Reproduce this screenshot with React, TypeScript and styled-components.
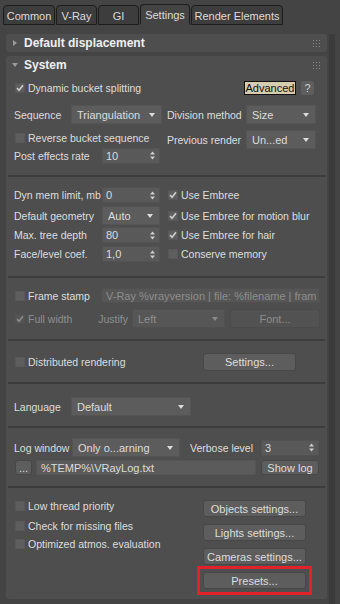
import React from "react";
import styled, { createGlobalStyle, css } from "styled-components";

const Global = createGlobalStyle`
  html, body { margin: 0; padding: 0; background: #444444; }
  body {
    font-family: "Liberation Sans", Arial, sans-serif;
    font-size: 10.5px;
    color: #dedede;
    width: 340px;
    height: 604px;
    overflow: hidden;
  }
  * { box-sizing: border-box; }
`;

const Root = styled.div`
  width: 340px;
  height: 604px;
  display: flex;
  flex-direction: column;
`;

const TabBar = styled.div`
  display: flex;
  align-items: flex-end;
  height: 25px;
  padding-left: 3px;
`;

const Tab = styled.div<{ $w: number; $active?: boolean }>`
  width: ${(p) => p.$w}px;
  height: ${(p) => (p.$active ? 21 : 20)}px;
  margin-right: 1px;
  display: flex;
  align-items: center;
  justify-content: center;
  font-size: 11px;
  color: #dcdcdc;
  border: 1px solid #1c1c1c;
  border-bottom: ${(p) => (p.$active ? "1px solid #444444" : "1px solid #1c1c1c")};
  border-radius: 4px 4px 0 0;
  background: ${(p) => (p.$active ? "#444444" : "#3d3d3d")};
  padding-top: 1px;
`;

const Main = styled.div`
  display: flex;
  padding-top: 9px;
  flex: 1;
  min-height: 0;
`;

const Rollouts = styled.div`
  margin-left: 6px;
  width: 321px;
  display: flex;
  flex-direction: column;
  gap: 4px;
`;

const Scrollbar = styled.div`
  margin-left: 2px;
  width: 6px;
  background: #3b3b3b;
`;

const Rollout = styled.div`
  background: #4e4e4e;
  border-radius: 3px;
  display: flex;
  flex-direction: column;
`;

const Header = styled.div`
  height: 18px;
  display: flex;
  align-items: center;
  padding-left: 6px;
  padding-right: 7px;
  font-weight: bold;
  font-size: 12px;
  color: #f0f0f0;
`;

const HeaderTitle = styled.span`
  flex: 1;
  margin-left: 6px;
`;

const Grip = () => (
  <svg width="7" height="7" viewBox="0 0 7 7">
    {[0, 3, 6].map((x) =>
      [0, 3, 6].map((y) => <rect key={`${x}-${y}`} x={x} y={y} width="1" height="1" fill="#8a8a8a" />)
    )}
  </svg>
);

const Tri = ({ open }: { open?: boolean }) =>
  open ? (
    <svg width="6" height="6" viewBox="0 0 6 6">
      <path d="M0 1 L6 1 L3 5 Z" fill="#9a9a9a" />
    </svg>
  ) : (
    <svg width="6" height="6" viewBox="0 0 6 6">
      <path d="M1 0 L5 3 L1 6 Z" fill="#9a9a9a" />
    </svg>
  );

const Body = styled.div`
  display: flex;
  flex-direction: column;
  padding: 0 2px;
`;

const Section = styled.div<{ $pt: number; $pb: number; $pr?: number }>`
  padding: ${(p) => p.$pt}px ${(p) => p.$pr ?? 9}px ${(p) => p.$pb}px 6px;
  display: flex;
  flex-direction: column;
`;

const Divider = styled.div`
  height: 2px;
  background: #3c3c3c;
`;

const Row = styled.div<{ $h?: number; $mt?: number; $gap?: number }>`
  display: flex;
  align-items: center;
  height: ${(p) => p.$h ?? 16}px;
  margin-top: ${(p) => p.$mt ?? 0}px;
  gap: ${(p) => p.$gap ?? 0}px;
`;

const Spacer = styled.div`
  flex: 1;
`;

const Gap = styled.div<{ $w: number }>`
  flex: none;
  width: ${(p) => p.$w}px;
`;

const Label = styled.span<{ $w?: number; $dim?: boolean; $ml?: number }>`
  ${(p) => (p.$w ? `width: ${p.$w}px; flex: none;` : "")}
  margin-left: ${(p) => p.$ml ?? 0}px;
  color: ${(p) => (p.$dim ? "#8e8e8e" : "#dedede")};
  white-space: nowrap;
  overflow: hidden;
`;

const CheckWrap = styled.label<{ $dim?: boolean }>`
  display: flex;
  align-items: center;
  gap: 3px;
  height: 14px;
  color: ${(p) => (p.$dim ? "#8e8e8e" : "#dedede")};
  white-space: nowrap;
  margin-left: 1px;
`;

const Box = styled.span<{ $dim?: boolean }>`
  width: 10px;
  height: 10px;
  flex: none;
  background: ${(p) => (p.$dim ? "#555555" : "#5e5e5e")};
  border: 1px solid ${(p) => (p.$dim ? "#525252" : "#585858")};
  display: flex;
  align-items: center;
  justify-content: center;
`;

const Check = ({ label, checked, dim }: { label: string; checked?: boolean; dim?: boolean }) => (
  <CheckWrap $dim={dim}>
    <Box $dim={dim}>
      {checked && (
        <svg width="8" height="8" viewBox="0 0 8 8">
          <path d="M1 4 L3 6.2 L7 1.2" stroke={dim ? "#8a8a8a" : "#cfcfcf"} strokeWidth="1.6" fill="none" />
        </svg>
      )}
    </Box>
    {label}
  </CheckWrap>
);

const fieldBase = css`
  display: flex;
  align-items: center;
  flex: none;
  padding-left: 5px;
  padding-right: 6px;
  white-space: nowrap;
  overflow: hidden;
`;

const DropBox = styled.div<{ $w: number; $h?: number; $dim?: boolean }>`
  ${fieldBase}
  width: ${(p) => p.$w}px;
  height: ${(p) => p.$h ?? 19}px;
  background: ${(p) => (p.$dim ? "#565656" : "#5c5c5c")};
  border: 1px solid ${(p) => (p.$dim ? "#505050" : "#545454")};
  color: ${(p) => (p.$dim ? "#8e8e8e" : "#dcdcdc")};
  font-size: 11px;
`;

const DropText = styled.span`
  flex: 1;
  overflow: hidden;
`;

const Dropdown = ({ value, w, h, dim }: { value: string; w: number; h?: number; dim?: boolean }) => (
  <DropBox $w={w} $h={h} $dim={dim}>
    <DropText>{value}</DropText>
    <svg width="6" height="4" viewBox="0 0 6 4">
      <path d="M0 0 L6 0 L3 4 Z" fill={dim ? "#8a8a8a" : "#dcdcdc"} />
    </svg>
  </DropBox>
);

const SpinBox = styled.div<{ $w: number }>`
  ${fieldBase}
  width: ${(p) => p.$w}px;
  height: 16px;
  padding-left: 3px;
  padding-right: 4px;
  background: #595959;
  border: 1px solid #525252;
  color: #dcdcdc;
  font-size: 11px;
`;

const Spinner = ({ value, w = 58 }: { value: string; w?: number }) => (
  <SpinBox $w={w}>
    <DropText>{value}</DropText>
    <svg width="5" height="9" viewBox="0 0 5 9">
      <path d="M0 3.5 L5 3.5 L2.5 0.5 Z" fill="#cfcfcf" />
      <path d="M0 5.5 L5 5.5 L2.5 8.5 Z" fill="#cfcfcf" />
    </svg>
  </SpinBox>
);

const TextField = styled.div<{ $w: number; $h?: number; $dim?: boolean }>`
  ${fieldBase}
  width: ${(p) => p.$w}px;
  height: ${(p) => p.$h ?? 15}px;
  padding-left: 4px;
  padding-right: 0;
  background: ${(p) => (p.$dim ? "#565656" : "#5b5b5b")};
  border: 1px solid ${(p) => (p.$dim ? "#505050" : "#555555")};
  color: ${(p) => (p.$dim ? "#8e8e8e" : "#dcdcdc")};
  font-size: 11px;
`;

const Button = styled.div<{ $w: number; $h?: number; $dim?: boolean; $marked?: boolean; $ml?: number }>`
  position: relative;
  width: ${(p) => p.$w}px;
  height: ${(p) => p.$h ?? 17}px;
  margin-left: ${(p) => p.$ml ?? 0}px;
  flex: none;
  display: flex;
  align-items: center;
  justify-content: center;
  background: ${(p) => (p.$dim ? "#525252" : "#5d5d5d")};
  border: 1px solid ${(p) => (p.$dim ? "#4b4b4b" : "#474747")};
  border-radius: 3px;
  color: ${(p) => (p.$dim ? "#8e8e8e" : "#dedede")};
  font-size: 11px;
  white-space: nowrap;
  ${(p) =>
    p.$marked &&
    css`
      &::after {
        content: "";
        position: absolute;
        inset: -7px;
        border: 3px solid #e2222b;
      }
    `}
`;

const Advanced = styled.div`
  width: 52px;
  height: 14px;
  background: #d7ccae;
  border: 1px solid #111111;
  color: #111111;
  font-size: 11px;
  display: flex;
  align-items: center;
  justify-content: center;
`;

const Help = styled.div`
  width: 13px;
  height: 14px;
  margin-left: 5px;
  margin-right: 2px;
  background: #5e5e5e;
  border-radius: 2px;
  color: #cfcfcf;
  font-size: 11px;
  display: flex;
  align-items: center;
  justify-content: center;
`;

const TwoCol = styled.div<{ $cols: string; $mt?: number; $gap?: number }>`
  display: grid;
  grid-template-columns: ${(p) => p.$cols};
  column-gap: ${(p) => p.$gap ?? 5}px;
  margin-top: ${(p) => p.$mt ?? 0}px;
  align-items: start;
`;

const Col = styled.div<{ $gap?: number; $pt?: number }>`
  display: flex;
  flex-direction: column;
  gap: ${(p) => p.$gap ?? 0}px;
  padding-top: ${(p) => p.$pt ?? 0}px;
`;

export default function App() {
  return (
    <Root>
      <Global />
      <TabBar>
        <Tab $w={52}>Common</Tab>
        <Tab $w={41}>V-Ray</Tab>
        <Tab $w={41}>GI</Tab>
        <Tab $w={50} $active>
          Settings
        </Tab>
        <Tab $w={92}>Render Elements</Tab>
      </TabBar>
      <Main>
        <Rollouts>
          <Rollout>
            <Header>
              <Tri />
              <HeaderTitle>Default displacement</HeaderTitle>
              <Grip />
            </Header>
          </Rollout>
          <Rollout>
            <Header>
              <Tri open />
              <HeaderTitle>System</HeaderTitle>
              <Grip />
            </Header>
            <Body>
              <Section $pt={7} $pb={12}>
                <Row $h={14}>
                  <Check label="Dynamic bucket splitting" checked />
                  <Spacer />
                  <Advanced>Advanced</Advanced>
                  <Help>?</Help>
                </Row>
                <TwoCol $cols="148px 149px" $mt={10}>
                  <Col>
                    <Row $h={19}>
                      <Label $w={57}>Sequence</Label>
                      <Dropdown value="Triangulation" w={91} />
                    </Row>
                    <Row $h={14} $mt={7}>
                      <Check label="Reverse bucket sequence" />
                    </Row>
                    <Row $h={15} $mt={3}>
                      <Label $w={88}>Post effects rate</Label>
                      <Spinner value="10" />
                    </Row>
                  </Col>
                  <Col>
                    <Row $h={19}>
                      <Label $w={79}>Division method</Label>
                      <Dropdown value="Size" w={70} />
                    </Row>
                    <Row $h={19} $mt={6}>
                      <Label $w={79}>Previous render</Label>
                      <Dropdown value="Un...ed" w={70} />
                    </Row>
                  </Col>
                </TwoCol>
              </Section>
              <Divider />
              <Section $pt={10} $pb={14}>
                <TwoCol $cols="146px 149px" $gap={7}>
                  <Col>
                    <Row $h={16}>
                      <Label $w={88}>Dyn mem limit, mb</Label>
                      <Spinner value="0" />
                    </Row>
                    <Row $h={19} $mt={3}>
                      <Label $w={88}>Default geometry</Label>
                      <Dropdown value="Auto" w={58} />
                    </Row>
                    <Row $h={16} $mt={2}>
                      <Label $w={88}>Max. tree depth</Label>
                      <Spinner value="80" />
                    </Row>
                    <Row $h={16} $mt={3}>
                      <Label $w={88}>Face/level coef.</Label>
                      <Spinner value="1,0" />
                    </Row>
                  </Col>
                  <Col>
                    <Row $h={16}>
                      <Check label="Use Embree" checked />
                    </Row>
                    <Row $h={19} $mt={3}>
                      <Check label="Use Embree for motion blur" checked />
                    </Row>
                    <Row $h={16} $mt={2}>
                      <Check label="Use Embree for hair" checked />
                    </Row>
                    <Row $h={16} $mt={3}>
                      <Check label="Conserve memory" />
                    </Row>
                  </Col>
                </TwoCol>
              </Section>
              <Divider />
              <Section $pt={10} $pb={11} $pr={5}>
                <Row $h={15}>
                  <Check label="Frame stamp" />
                  <Spacer />
                  <TextField $w={219} $dim>
                    V-Ray %vrayversion | file: %filename | fram
                  </TextField>
                </Row>
                <Row $h={19} $mt={6}>
                  <Check label="Full width" checked dim />
                  <Spacer />
                  <Label $dim>Justify</Label>
                  <Gap $w={4} />
                  <Dropdown value="Left" w={93} dim />
                  <Gap $w={5} />
                  <Button $w={90} $h={19} $dim>
                    Font...
                  </Button>
                </Row>
              </Section>
              <Divider />
              <Section $pt={12} $pb={11}>
                <TwoCol $cols="189px 93px" $gap={0}>
                  <Row $h={18}>
                    <Check label="Distributed rendering" />
                  </Row>
                  <Button $w={93} $h={18}>
                    Settings...
                  </Button>
                </TwoCol>
              </Section>
              <Divider />
              <Section $pt={13} $pb={10}>
                <Row $h={19}>
                  <Label $w={57}>Language</Label>
                  <Dropdown value="Default" w={120} />
                </Row>
              </Section>
              <Divider />
              <Section $pt={10} $pb={11} $pr={6}>
                <Row $h={19}>
                  <Label $w={58}>Log window</Label>
                  <Dropdown value="Only o...arning" w={108} />
                  <Label $w={71} $ml={10}>
                    Verbose level
                  </Label>
                  <Spinner value="3" />
                </Row>
                <Row $h={15} $mt={3}>
                  <Button $w={17} $h={15} $ml={1}>
                    ...
                  </Button>
                  <Gap $w={4} />
                  <TextField $w={220}>%TEMP%\VRayLog.txt</TextField>
                  <Spacer />
                  <Button $w={58} $h={15}>
                    Show log
                  </Button>
                </Row>
              </Section>
              <Divider />
              <Section $pt={11} $pb={10}>
                <TwoCol $cols="189px 103px" $gap={0}>
                  <Col>
                    <Check label="Low thread priority" />
                    <Row $h={14} $mt={6}>
                      <Check label="Check for missing files" />
                    </Row>
                    <Row $h={14} $mt={4}>
                      <Check label="Optimized atmos. evaluation" />
                    </Row>
                  </Col>
                  <Col $gap={7} $pt={1}>
                    <Button $w={103}>Objects settings...</Button>
                    <Button $w={103}>Lights settings...</Button>
                    <Button $w={103}>Cameras settings...</Button>
                    <Button $w={103} $marked>
                      Presets...
                    </Button>
                  </Col>
                </TwoCol>
              </Section>
            </Body>
          </Rollout>
        </Rollouts>
        <Scrollbar />
      </Main>
    </Root>
  );
}
